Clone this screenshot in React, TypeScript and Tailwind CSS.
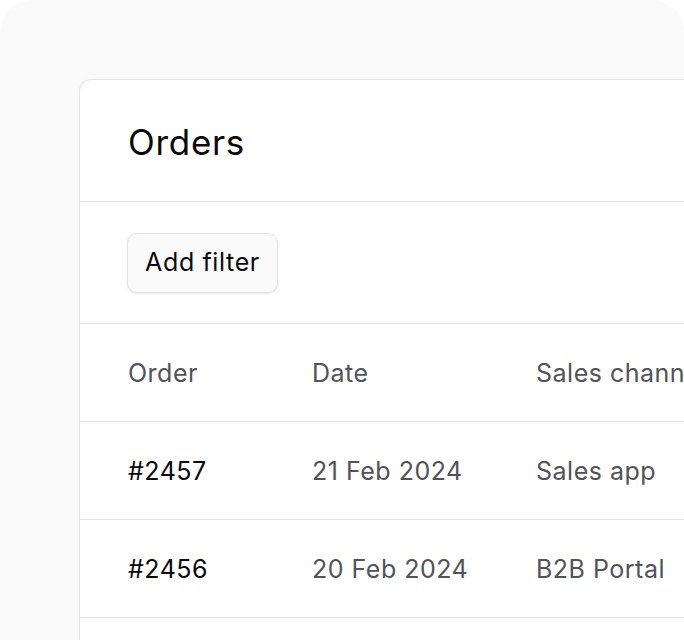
export default function App() {
  const rows = [
    { id: '#2457', date: '21 Feb 2024', channel: 'Sales app' },
    { id: '#2456', date: '20 Feb 2024', channel: 'B2B Portal' },
  ];

  return (
    <div className="h-[640px] w-[684px] overflow-hidden bg-white font-['Inter',sans-serif]">
      <div className="flex h-full rounded-t-[32px] bg-[#fafafa] pl-[79px] pt-[79px]">
        <div className="w-[720px] shrink-0 rounded-tl-[12px] border-l border-t border-[#e4e4e7] bg-white">
          {/* title */}
          <div className="flex h-[122px] items-center border-b border-[#e4e4e7] px-12 pt-1">
            <h1 className="text-[35px] font-normal tracking-[0.02em] text-[#09090b]">Orders</h1>
          </div>

          {/* filters */}
          <div className="flex h-[122px] items-center border-b border-[#e4e4e7] pl-[47px]">
            <button className="h-[60px] w-[151px] rounded-[10px] border border-[#e4e4e7] bg-[#fafafa] text-[25px] tracking-[0.025em] text-[#09090b] shadow-[0_1px_2px_rgba(0,0,0,0.1)]">
              Add filter
            </button>
          </div>

          {/* table */}
          <div className="flex h-[98px] items-center border-b border-[#e4e4e7] pl-12 pt-[2px] text-[25px] tracking-[0.02em] text-[#52525b]">
            <div className="w-[184px]">Order</div>
            <div className="w-[224px]">Date</div>
            <div className="whitespace-nowrap">Sales channel</div>
          </div>
          {rows.map((r) => (
            <div key={r.id} className="flex h-[98px] items-center border-b border-[#e4e4e7] pl-12 pt-[2px] text-[25px] tracking-[0.02em]">
              <div className="w-[184px] text-[#09090b]">{r.id}</div>
              <div className="w-[224px] text-[#52525b]">{r.date}</div>
              <div className="whitespace-nowrap text-[#52525b]">{r.channel}</div>
            </div>
          ))}
          <div className="h-[98px]" />
        </div>
      </div>
    </div>
  );
}
